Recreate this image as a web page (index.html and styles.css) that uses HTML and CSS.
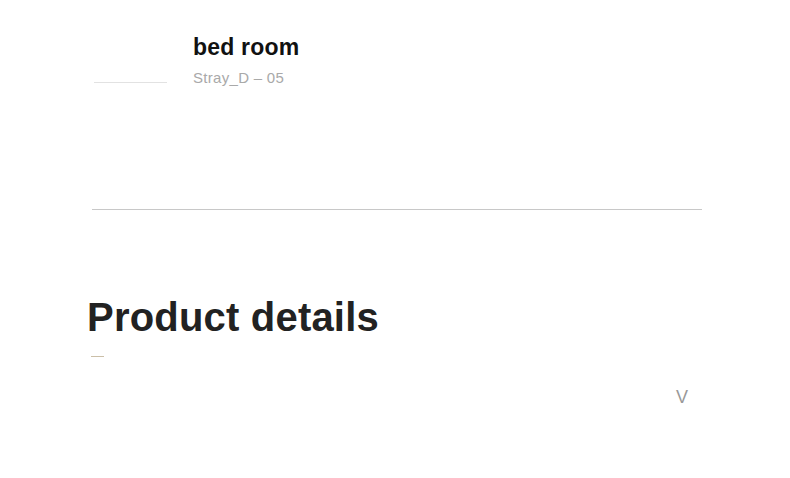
FILE: index.html
```html
<!DOCTYPE html>
<html>
<head>
<meta charset="utf-8">
<link rel="stylesheet" href="styles.css">
</head>
<body>
<div class="page">
  <div class="head">
    <div class="head-line"></div>
    <div class="head-text">
      <div class="title">bed room</div>
      <div class="sub">Stray_D – 05</div>
    </div>
  </div>
  <div class="rule"></div>
  <h2 class="pd">Product details</h2>
  <div class="accent"></div>
  <div class="toggle-row"><span class="toggle">V</span></div>
</div>
</body>
</html>
```
FILE: styles.css
```css
html, body { margin: 0; padding: 0; background: #fff; }
body { font-family: "Liberation Sans", Arial, sans-serif; width: 790px; height: 478px; overflow: hidden; }
.page { padding: 0 88px 0 92px; }
.head { display: flex; align-items: flex-start; padding-top: 34px; height: 175px; }
.head-line { width: 73px; height: 1px; background: #e2e2e2; margin: 48px 0 0 2px; }
.head-text { margin-left: 26px; }
.title { font-size: 23px; font-weight: bold; color: #111; line-height: 26px; letter-spacing: 0.2px; }
.sub { font-size: 15px; color: #a9a9a9; line-height: 18px; margin-top: 9px; letter-spacing: 0.3px; }
.rule { height: 1px; background: #c8c8c8; width: 610px; }
.pd { margin: 84px 0 0 -5px; font-size: 40px; font-weight: bold; color: #222; line-height: 46px; letter-spacing: 0.2px; }
.accent { width: 13px; height: 1px; background: #cbbfa8; margin: 16px 0 0 -1px; }
.toggle-row { display: flex; justify-content: flex-end; padding-right: 14px; margin-top: 30px; }
.toggle { font-size: 18px; color: #999; line-height: 20px; }
```
